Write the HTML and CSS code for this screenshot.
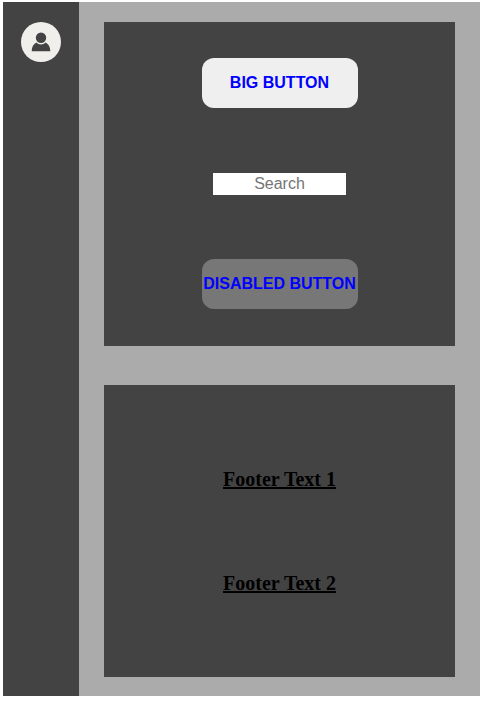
FILE: index.html
```html
<!DOCTYPE html>
<html lang="en">
<head>
  <meta charset="utf-8">
  <meta name="viewport" content="width=device-width, initial-scale=1">
  <title>Dashboard</title>
  <link rel="stylesheet" href="styles.css">
</head>
<body>
  <div class="layout">
    <aside class="sidebar">
      <svg class="avatar" viewBox="0 0 40 40" role="img" aria-label="User">
        <circle cx="20" cy="20" r="20" fill="#f0efeb"/>
        <path d="M10.700 29.300C10.700 25 12.500 22 15.300 20.500C17.800 23 22.200 23 24.700 20.500C27.500 22 29.300 25 29.300 29.300Z" fill="#434343"/>
        <circle cx="20" cy="15.800" r="5.200" fill="#434343"/>
      </svg>
    </aside>
    <div class="content">
      <main class="card controls">
        <button class="button" type="button">BIG BUTTON</button>
        <input class="search" type="text" placeholder="Search" aria-label="Search">
        <button class="button" type="button" disabled>DISABLED BUTTON</button>
      </main>
      <footer class="card footer">
        <p class="footer-text">Footer Text 1</p>
        <p class="footer-text">Footer Text 2</p>
      </footer>
    </div>
  </div>
</body>
</html>
```
FILE: styles.css
```css
* {
  box-sizing: border-box;
}

body {
  margin: 0;
  padding: 2px 8px 6px 3px;
  background: #fff;
  font-family: "Liberation Serif", "Times New Roman", serif;
}

.layout {
  display: grid;
  grid-template-columns: 76px 1fr;
  min-height: calc(100vh - 8px);
}

.sidebar {
  padding: 20px 18px;
  background: #434343;
}

.avatar {
  display: block;
  width: 100%;
}

.content {
  display: grid;
  grid-template-rows: 10fr 9fr;
  gap: 39px;
  padding: 20px 25px 19px;
  background: #ababab;
}

.card {
  display: flex;
  flex-direction: column;
  align-items: center;
  background: #434343;
}

.controls {
  justify-content: space-between;
  padding: 36px 0 37px;
}

.button {
  width: 156px;
  height: 50px;
  padding: 0;
  border: 0;
  border-radius: 12px;
  background: #efefef;
  color: #00f;
  font: bold 16px "Liberation Sans", Arial, sans-serif;
  white-space: nowrap;
}

.button:disabled {
  background: #777;
}

.search {
  width: 133px;
  height: 22px;
  padding: 0;
  border: 0;
  background: #fff;
  font: 16px "Liberation Sans", Arial, sans-serif;
  text-align: center;
}

.search::placeholder {
  color: #757575;
}

.footer {
  justify-content: center;
  gap: 80px;
}

.footer-text {
  margin: 0;
  color: #000;
  font-size: 20px;
  font-weight: bold;
  line-height: 24px;
  text-decoration: underline;
}
```
